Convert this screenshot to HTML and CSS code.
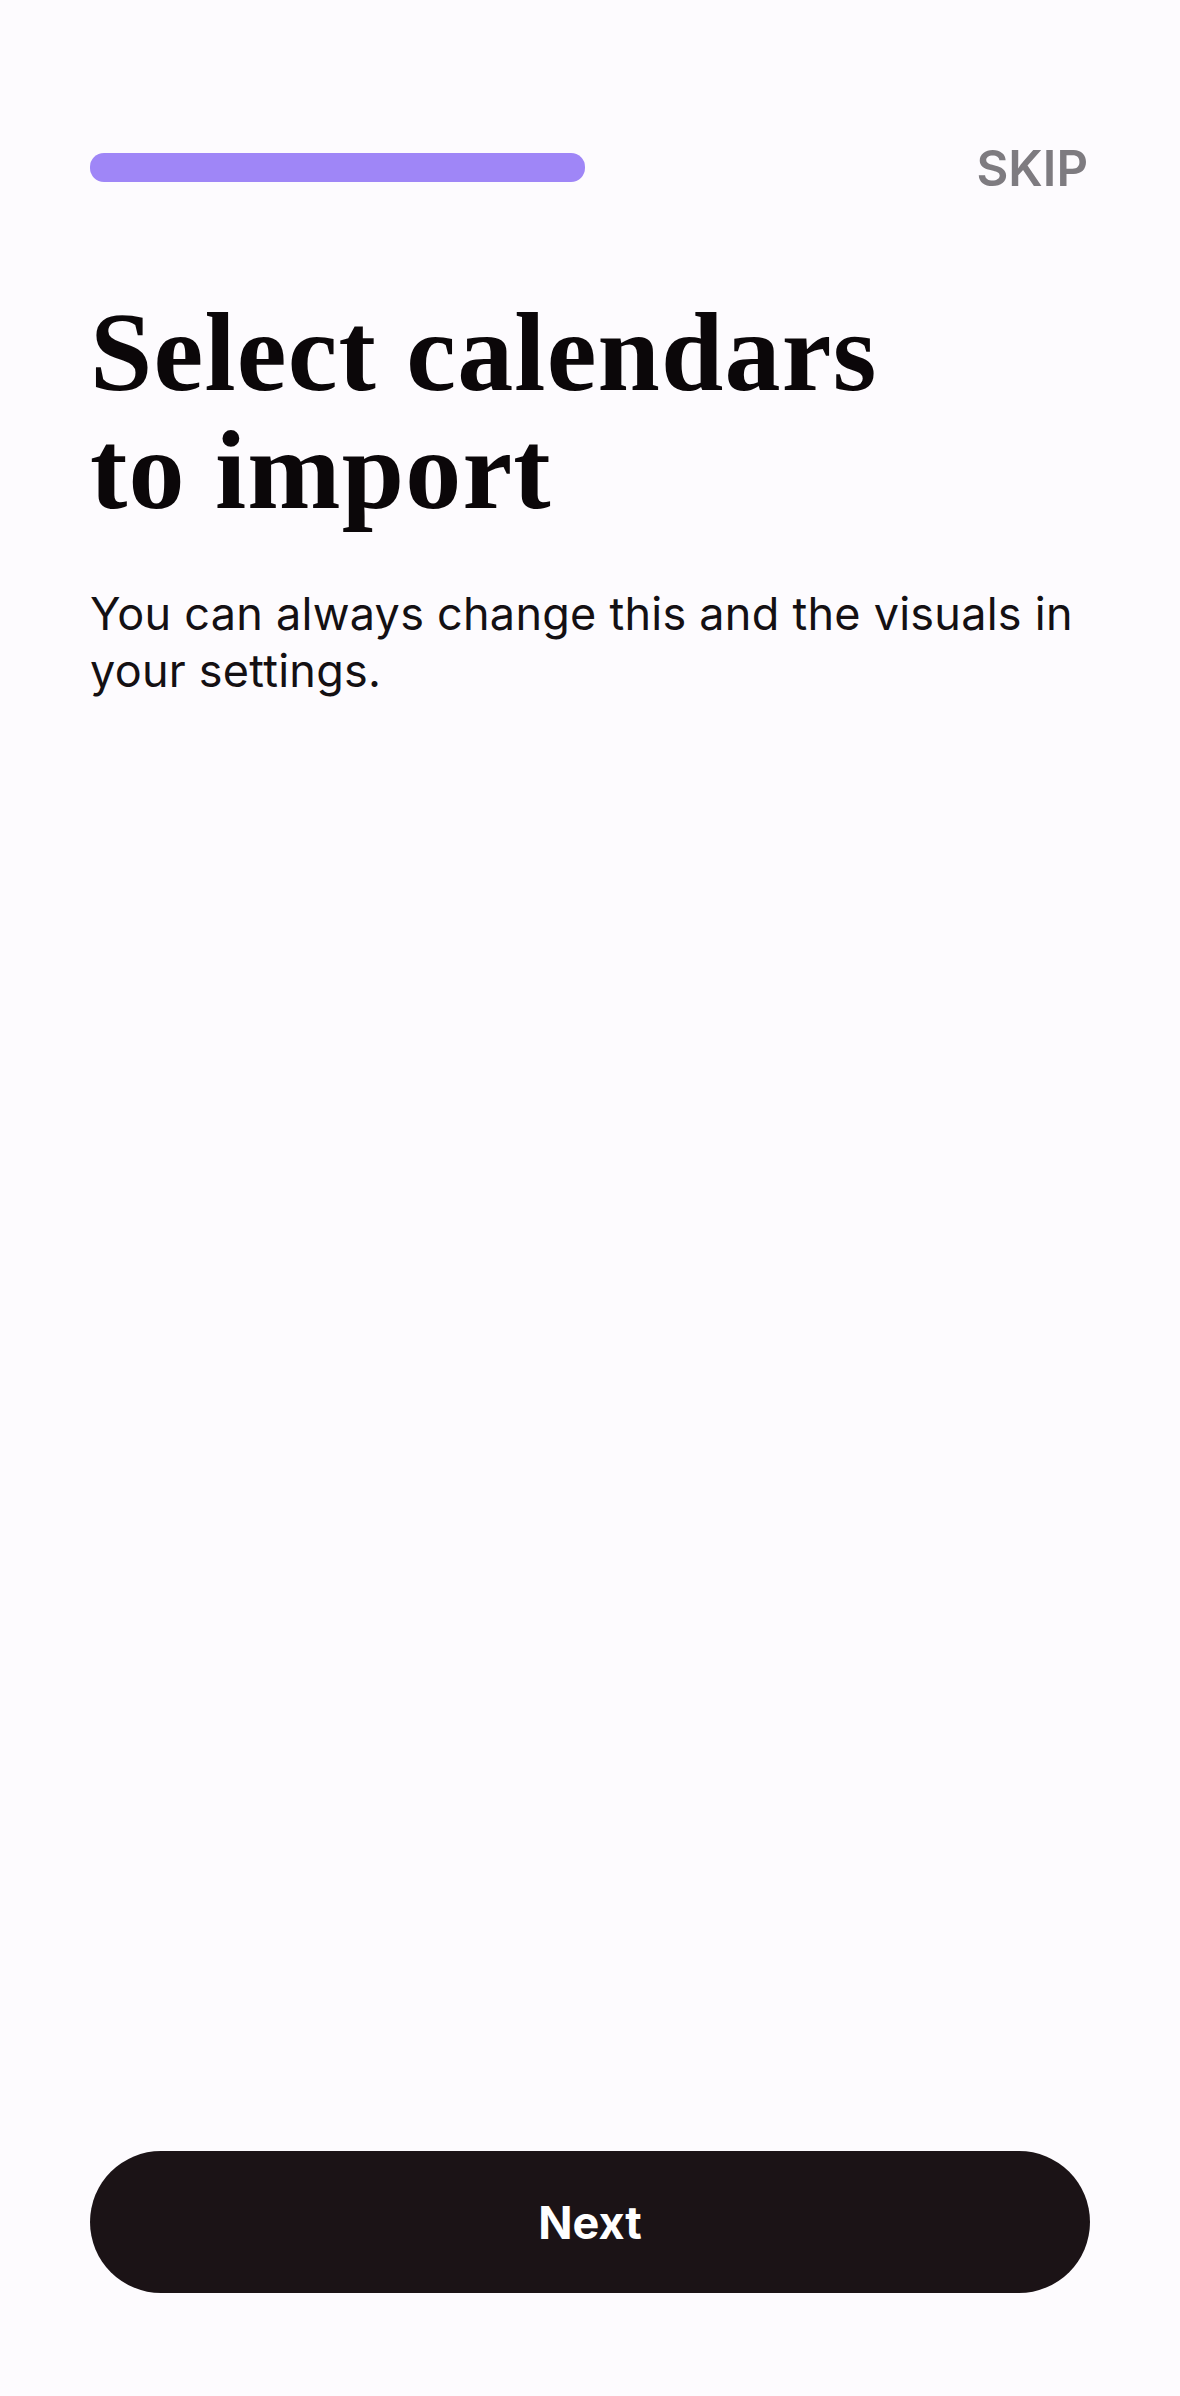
FILE: index.html
```html
<!DOCTYPE html>
<html lang="en">
<head>
<meta charset="utf-8">
<title>Select calendars to import</title>
<link rel="stylesheet" href="styles.css">
</head>
<body>
<main class="screen">
  <header class="top-row">
    <div class="progress"><div class="progress-fill"></div></div>
    <button class="skip" type="button">SKIP</button>
  </header>
  <h1 class="title">Select calendars<br>to import</h1>
  <p class="subtitle">You can always change this and the visuals in your settings.</p>
  <div class="spacer"></div>
  <button class="next" type="button">Next</button>
</main>
</body>
</html>
```

FILE: styles.css
```css
html, body {
  margin: 0;
  padding: 0;
  background: #fdfbfe;
}

.screen {
  box-sizing: border-box;
  height: 2396px;
  padding: 137px 90px 103px;
  display: flex;
  flex-direction: column;
}

.top-row {
  height: 60px;
  display: flex;
  align-items: center;
  justify-content: space-between;
}

.progress {
  width: 495px;
  height: 29px;
}

.progress-fill {
  width: 100%;
  height: 100%;
  border-radius: 14px;
  background: #9f86f7;
}

.skip {
  border: 0;
  background: none;
  padding: 3px 0 0;
  margin-right: 2px;
  font-family: Inter, "Liberation Sans", sans-serif;
  font-weight: 600;
  font-size: 49px;
  line-height: 60px;
  color: #7e7b80;
}

.title {
  margin: 96px 0 0;
  font-family: "Liberation Serif", "Times New Roman", serif;
  font-weight: 700;
  font-size: 112px;
  line-height: 118px;
  letter-spacing: 1.2px;
  color: #0b0709;
}

.subtitle {
  margin: 56px 0 0;
  font-family: Inter, "Liberation Sans", sans-serif;
  font-weight: 400;
  font-size: 45px;
  line-height: 57px;
  letter-spacing: 0.25px;
  color: #141013;
}

.spacer {
  flex: 1;
}

.next {
  height: 142px;
  width: 100%;
  border: 0;
  border-radius: 71px;
  background: #1b1316;
  color: #ffffff;
  font-family: Inter, "Liberation Sans", sans-serif;
  font-weight: 700;
  font-size: 45px;
}
```
